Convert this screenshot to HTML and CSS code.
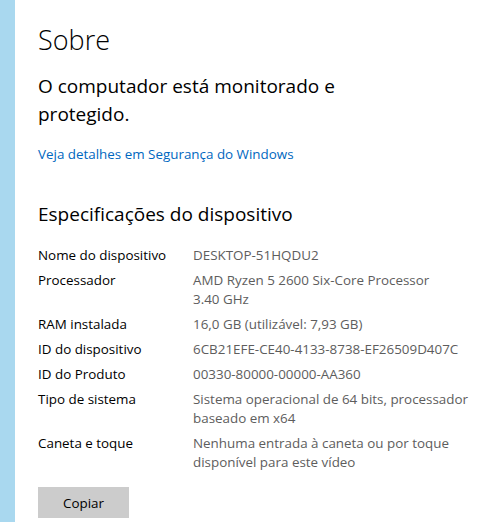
FILE: index.html
```html
<!DOCTYPE html>
<html lang="pt-BR">
<head>
  <meta charset="UTF-8" />
  <meta name="viewport" content="width=device-width, initial-scale=1.0"/>
  <title>Sobre</title>
  <link rel="stylesheet" href="styles.css">
</head>
<body>
  <div class="window">
    <div class="accent-strip"></div>

    <main class="content">
      <h1 class="page-title">Sobre</h1>

      <p class="status">O computador está monitorado e<br>protegido.</p>

      <a class="link" href="#">Veja detalhes em Segurança do Windows</a>

      <h2 class="section-title">Especificações do dispositivo</h2>

      <dl class="specs">
        <div class="spec-row">
          <dt>Nome do dispositivo</dt>
          <dd>DESKTOP-51HQDU2</dd>
        </div>
        <div class="spec-row">
          <dt>Processador</dt>
          <dd>AMD Ryzen 5 2600 Six-Core Processor<br>3.40 GHz</dd>
        </div>
        <div class="spec-row">
          <dt>RAM instalada</dt>
          <dd>16,0 GB (utilizável: 7,93 GB)</dd>
        </div>
        <div class="spec-row">
          <dt>ID do dispositivo</dt>
          <dd>6CB21EFE-CE40-4133-8738-EF26509D407C</dd>
        </div>
        <div class="spec-row">
          <dt>ID do Produto</dt>
          <dd>00330-80000-00000-AA360</dd>
        </div>
        <div class="spec-row">
          <dt>Tipo de sistema</dt>
          <dd>Sistema operacional de 64 bits, processador<br>baseado em x64</dd>
        </div>
        <div class="spec-row">
          <dt>Caneta e toque</dt>
          <dd>Nenhuma entrada à caneta ou por toque<br>disponível para este vídeo</dd>
        </div>
      </dl>

      <button class="copy-btn">Copiar</button>
    </main>
  </div>
</body>
</html>
```

FILE: styles.css
```css
:root {
  --accent-strip: #a9d8ef;
  --link: #0067c0;
  --text: #000000;
  --text-muted: #5d5d5d;
  --btn-bg: #cccccc;
}

body {
  margin: 0;
  padding: 0;
  background: #ffffff;
  color: var(--text);
  font-family: 'Open Sans', 'Noto Sans', sans-serif;
  font-size: 13.4px;
}

.window {
  display: flex;
  min-height: 522px;
}

.accent-strip {
  width: 15px;
  flex-shrink: 0;
  background: var(--accent-strip);
}

.content {
  padding: 20px 0 0 23px;
  flex: 1;
}

.page-title {
  margin: 0;
  font-size: 27px;
  font-weight: 300;
  line-height: 40px;
}

.status {
  margin: 12px 0 0;
  font-size: 19px;
  line-height: 28px;
}

.link {
  display: inline-block;
  margin-top: 16px;
  color: var(--link);
  text-decoration: none;
  line-height: 20px;
}

.section-title {
  margin: 36px 0 0;
  font-size: 19px;
  font-weight: 400;
  line-height: 28px;
}

.specs {
  margin: 15px 0 0;
}

.spec-row {
  display: flex;
  padding: 3px 0;
  line-height: 19px;
}

.spec-row dt {
  width: 155px;
  flex-shrink: 0;
}

.spec-row dd {
  margin: 0;
  color: var(--text-muted);
}

.copy-btn {
  margin-top: 12px;
  width: 91px;
  height: 31px;
  border: none;
  background: var(--btn-bg);
  font-family: inherit;
  font-size: 13.4px;
  color: var(--text);
}
```
